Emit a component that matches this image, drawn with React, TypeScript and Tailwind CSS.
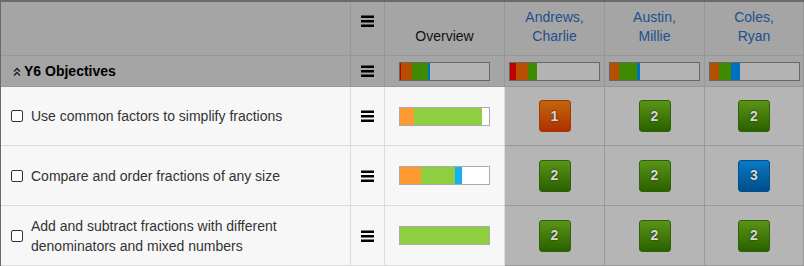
import React from "react";

const font = { fontFamily: '"Liberation Sans", Arial, sans-serif' };

function Bars() {
  return (
    <svg width="13" height="12" viewBox="0 0 13 12">
      <rect x="0" y="0.5" width="13" height="2.5" fill="#000" />
      <rect x="0" y="5" width="13" height="2.5" fill="#000" />
      <rect x="0" y="9.5" width="13" height="2.5" fill="#000" />
    </svg>
  );
}

function Chevrons() {
  return (
    <svg width="8" height="9" viewBox="0 0 8 9">
      <polyline points="1,4.5 4,1.5 7,4.5" fill="none" stroke="#222" strokeWidth="1.5" />
      <polyline points="1,8.5 4,5.5 7,8.5" fill="none" stroke="#222" strokeWidth="1.5" />
    </svg>
  );
}

type Seg = { w: number; c: string };

function HeadBar({ segs }: { segs: Seg[] }) {
  return (
    <div className="flex w-[91px] h-[19px] border border-[#666] bg-[#b3b3b3]">
      {segs.map((s, i) => (
        <div key={i} className="h-full" style={{ width: s.w, background: s.c }} />
      ))}
    </div>
  );
}

function DataBar({ segs }: { segs: Seg[] }) {
  return (
    <div className="flex w-[91px] h-[19px] border border-[#aaa] bg-white">
      {segs.map((s, i) => (
        <div key={i} className="h-full" style={{ width: s.w, background: s.c }} />
      ))}
    </div>
  );
}

function Badge({ n }: { n: number }) {
  const cls =
    n === 1
      ? "bg-linear-to-b from-[#c2650c] to-[#b02e00] border-[#a23a00]"
      : n === 2
      ? "bg-linear-to-b from-[#5a9416] to-[#2a6100] border-[#2f6208]"
      : "bg-linear-to-b from-[#0a7ac4] to-[#004e8c] border-[#00508e]";
  return (
    <div
      className={`w-8 h-8 rounded-[3px] border flex items-center justify-center text-[14px] font-bold text-[#d6d6d6] [text-shadow:0_0_2px_#1a1a1a] ${cls}`}
    >
      {n}
    </div>
  );
}

const R = "#c00000";
const O = "#b45000";
const G = "#3f8a00";
const B = "#0070c0";
const lo = "#ff9a33";
const lg = "#8fce3e";
const lb = "#16b0f5";

const rows = [
  {
    text: "Use common factors to simplify fractions",
    bar: [
      { w: 14, c: lo },
      { w: 68, c: lg },
    ],
    badges: [1, 2, 2],
    h: "h-[59px]",
  },
  {
    text: "Compare and order fractions of any size",
    bar: [
      { w: 21, c: lo },
      { w: 34, c: lg },
      { w: 7, c: lb },
    ],
    badges: [2, 2, 3],
    h: "h-[60px]",
  },
  {
    text: "Add and subtract fractions with different denominators and mixed numbers",
    bar: [{ w: 89, c: lg }],
    badges: [2, 2, 2],
    h: "h-[60px]",
  },
];

export default function App() {
  const hdr = "bg-[#a5a5a5] border-r border-b border-[#979797]";
  return (
    <div className="w-[804px] h-[266px] bg-white" style={font}>
      <div className="border-t-2 border-l border-[#6a6a6a] grid grid-cols-[350px_34px_120px_100px_100px_99px]">
        {/* header row 1 */}
        <div className={`${hdr} h-[54px]`} />
        <div className={`${hdr} h-[54px] flex justify-center pt-[13px]`}>
          <Bars />
        </div>
        <div className={`${hdr} h-[54px] flex items-end justify-center pb-[9px] text-[14px] leading-[19px] text-[#111]`}>
          Overview
        </div>
        {[
          ["Andrews,", "Charlie"],
          ["Austin,", "Millie"],
          ["Coles,", "Ryan"],
        ].map(([a, b]) => (
          <div
            key={a}
            className={`${hdr} h-[54px] flex flex-col items-center justify-end pb-[9px] text-[14px] leading-[19px] text-[#21508f]`}
          >
            <span>{a}</span>
            <span>{b}</span>
          </div>
        ))}

        {/* header row 2 */}
        <div className={`${hdr} h-[31px] flex items-center pl-[12px] gap-[3px]`}>
          <Chevrons />
          <span className="text-[14px] font-bold text-black">Y6 Objectives</span>
        </div>
        <div className={`${hdr} h-[31px] flex items-center justify-center`}>
          <Bars />
        </div>
        <div className={`${hdr} h-[31px] flex items-center justify-center`}>
          <HeadBar
            segs={[
              { w: 1, c: R },
              { w: 11, c: O },
              { w: 16, c: G },
              { w: 2, c: B },
            ]}
          />
        </div>
        <div className={`${hdr} h-[31px] flex items-center justify-center`}>
          <HeadBar
            segs={[
              { w: 6, c: R },
              { w: 12, c: O },
              { w: 9, c: G },
            ]}
          />
        </div>
        <div className={`${hdr} h-[31px] flex items-center justify-center`}>
          <HeadBar
            segs={[
              { w: 9, c: O },
              { w: 18, c: G },
              { w: 3, c: B },
            ]}
          />
        </div>
        <div className={`${hdr} h-[31px] flex items-center justify-center`}>
          <HeadBar
            segs={[
              { w: 9, c: O },
              { w: 12, c: G },
              { w: 9, c: B },
            ]}
          />
        </div>

        {/* data rows */}
        {rows.map((r, i) => (
          <React.Fragment key={i}>
            <div
              className={`${r.h} bg-[#f7f7f7] border-r border-b border-[#dcdcdc] flex items-center pl-[10px] gap-[8px]`}
            >
              <div className="w-3 h-3 shrink-0 border border-[#333] rounded-[2px] bg-white" />
              <span className="text-[14px] leading-[20px] text-[#333] pr-[50px]">{r.text}</span>
            </div>
            <div className={`${r.h} bg-[#f7f7f7] border-r border-b border-[#dcdcdc] flex items-center justify-center`}>
              <Bars />
            </div>
            <div className={`${r.h} bg-[#f7f7f7] border-r border-b border-[#dcdcdc] flex items-center justify-center`}>
              <DataBar segs={r.bar} />
            </div>
            {r.badges.map((n, j) => (
              <div
                key={j}
                className={`${r.h} bg-[#b5b5b5] border-r border-b border-[#999] flex items-center justify-center`}
              >
                <Badge n={n} />
              </div>
            ))}
          </React.Fragment>
        ))}
      </div>
    </div>
  );
}
